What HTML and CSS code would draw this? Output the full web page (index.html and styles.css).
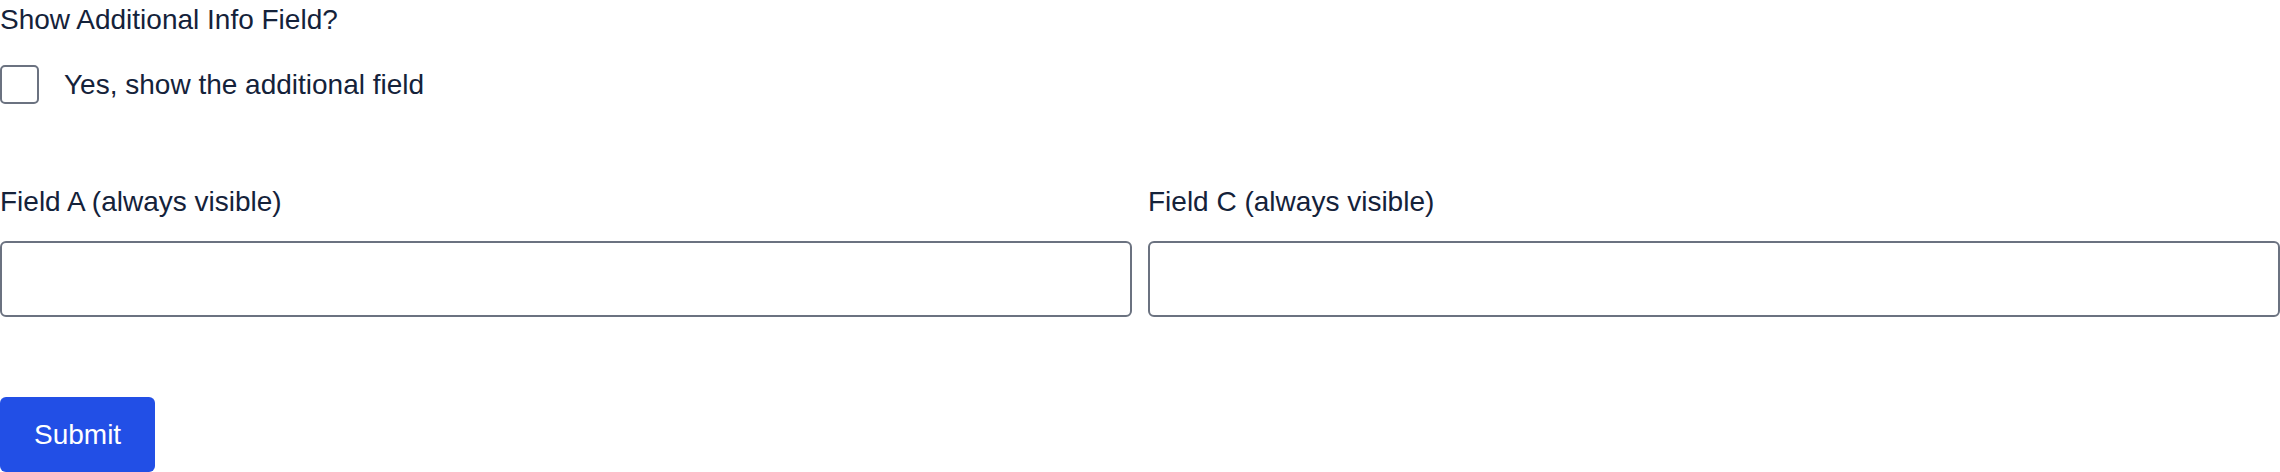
FILE: index.html
```html
<!DOCTYPE html>
<html lang="en">
  <head>
    <meta charset="UTF-8" />
    <meta name="viewport" content="width=device-width, initial-scale=1.0" />
    <title>Conditional Fields</title>
    <link rel="stylesheet" href="styles.css">
  </head>
  <body>
    <form class="form">
      <p class="question">Show Additional Info Field?</p>
      <label class="check-row">
        <input class="check" type="checkbox" />
        <span class="check-text">Yes, show the additional field</span>
      </label>
      <div class="fields">
        <div class="field">
          <label class="field-label" for="fieldA">Field A (always visible)</label>
          <input class="field-input" id="fieldA" type="text" />
        </div>
        <div class="field">
          <label class="field-label" for="fieldC">Field C (always visible)</label>
          <input class="field-input" id="fieldC" type="text" />
        </div>
      </div>
      <button class="submit" type="button">Submit</button>
    </form>
  </body>
</html>
```

FILE: styles.css
```css
body {
  margin: 0;
  font-family: "Liberation Sans", Arial, sans-serif;
  font-size: 28px;
  line-height: 40.5px;
  color: #14223a;
  background: #fff;
}
.form {
  display: flex;
  flex-direction: column;
  align-items: flex-start;
}
.question {
  margin: 0 0 24px 0;
}
.check-row {
  display: flex;
  align-items: center;
  gap: 25px;
}
.check {
  -webkit-appearance: none;
  appearance: none;
  margin: 0;
  width: 39px;
  height: 39px;
  border: 2px solid #6b7280;
  border-radius: 5px;
  background: #fff;
}
.fields {
  display: grid;
  grid-template-columns: 1fr 1fr;
  gap: 16px;
  width: 100%;
  margin-top: 77px;
}
.field {
  display: flex;
  flex-direction: column;
}
.field-label {
  margin-bottom: 18px;
}
.field-input {
  box-sizing: border-box;
  width: 100%;
  height: 76px;
  border: 2px solid #6b7280;
  border-radius: 6px;
  padding: 0 18px;
  font: inherit;
  color: inherit;
  background: #fff;
}
.submit {
  margin-top: 80px;
  padding: 17px 34px;
  border: none;
  border-radius: 6px;
  background-color: #224fe6;
  color: #fff;
  font: inherit;
  line-height: 41px;
}
```
